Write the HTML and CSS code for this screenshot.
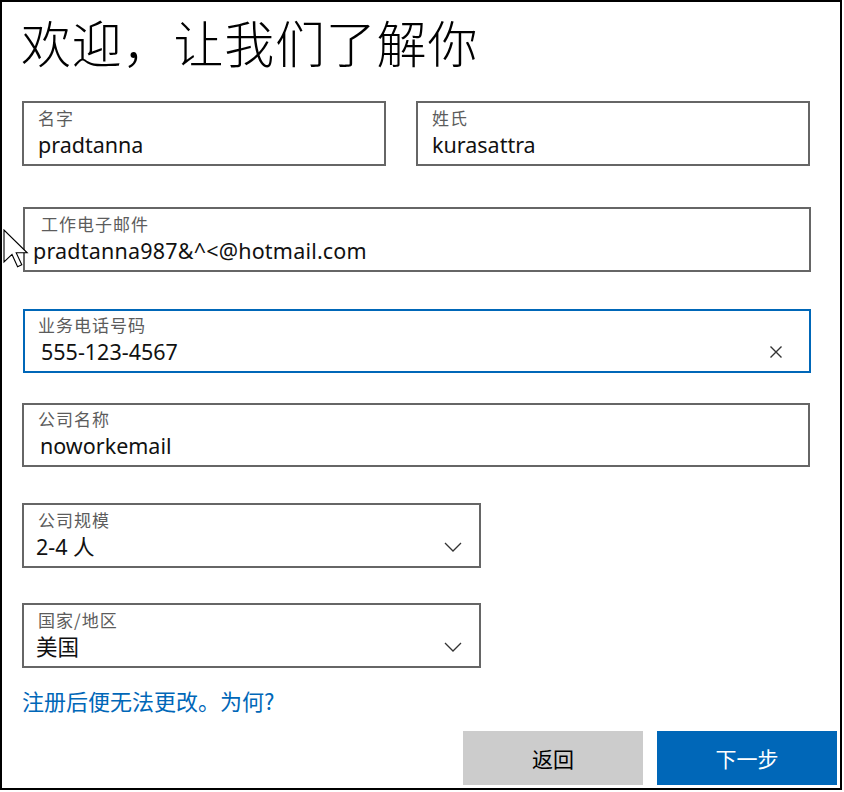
FILE: index.html
```html
<!DOCTYPE html>
<html lang="zh-CN">
<head>
<meta charset="utf-8">
<title>欢迎，让我们了解你</title>
<link rel="stylesheet" href="styles.css">
</head>
<body>
<div class="frame">
  <h1 class="title">欢迎，让我们了解你</h1>

  <div class="row-names">
    <div class="field field-first">
      <div class="label">名字</div>
      <div class="value">pradtanna</div>
    </div>
    <div class="field field-last">
      <div class="label">姓氏</div>
      <div class="value">kurasattra</div>
    </div>
  </div>

  <div class="field field-wide field-email">
    <div class="label">工作电子邮件</div>
    <div class="value value-email">pradtanna987&amp;^&lt;@hotmail.com</div>
  </div>

  <div class="field field-wide field-phone is-focused">
    <div class="label">业务电话号码</div>
    <div class="value value-row">
      <span>555-123-4567</span>
      <svg class="icon-clear" width="14" height="14" viewBox="0 0 14 14" aria-hidden="true">
        <path d="M1.5 1.5 L12.5 12.5 M12.5 1.5 L1.5 12.5" stroke="#333" stroke-width="1.4" fill="none"/>
      </svg>
    </div>
  </div>

  <div class="field field-wide field-company">
    <div class="label">公司名称</div>
    <div class="value">noworkemail</div>
  </div>

  <div class="field field-select field-size">
    <div class="label">公司规模</div>
    <div class="value value-row">
      <span>2-4 人</span>
      <svg class="icon-chevron" width="18" height="10" viewBox="0 0 18 10" aria-hidden="true">
        <path d="M1 1 L9 9 L17 1" stroke="#333" stroke-width="1.3" fill="none"/>
      </svg>
    </div>
  </div>

  <div class="field field-select field-country">
    <div class="label">国家/地区</div>
    <div class="value value-row">
      <span>美国</span>
      <svg class="icon-chevron" width="18" height="10" viewBox="0 0 18 10" aria-hidden="true">
        <path d="M1 1 L9 9 L17 1" stroke="#333" stroke-width="1.3" fill="none"/>
      </svg>
    </div>
  </div>

  <a class="why" href="#">注册后便无法更改。为何?</a>

  <div class="actions">
    <button class="btn btn-back" type="button">返回</button>
    <button class="btn btn-next" type="button">下一步</button>
  </div>

  <svg class="cursor" width="26" height="42" viewBox="0 0 26 42" aria-hidden="true">
    <path d="M1 1 L1 33 L9 25.4 L14.6 37.8 L18.8 35.8 L13.2 23.8 L24.2 23.8 Z" fill="#fff" stroke="#000" stroke-width="1.1" stroke-linejoin="miter"/>
  </svg>
</div>
</body>
</html>
```

FILE: styles.css
```css
* {
  box-sizing: border-box;
}

html, body {
  margin: 0;
  padding: 0;
  background: #fff;
}

body {
  font-family: "Noto Sans", "Noto Sans CJK SC", sans-serif;
  color: #000;
}

.frame {
  position: relative;
  width: 842px;
  height: 790px;
  border: 2px solid #000;
  padding: 9px 0 0 20px;
  display: flex;
  flex-direction: column;
  align-items: flex-start;
}

.title {
  margin: 0 0 0 -1px;
  font-family: "Noto Sans CJK SC", sans-serif;
  font-weight: 300;
  font-size: 50px;
  line-height: 60px;
  color: #000;
  letter-spacing: 0.8px;
}

.row-names {
  display: flex;
  gap: 30px;
  margin-top: 30px;
}

.field {
  height: 65px;
  border: 2px solid #666;
  padding: 2px 14px 0 14px;
  display: flex;
  flex-direction: column;
}

.field-first {
  width: 364px;
}

.field-last {
  width: 394px;
}

.field-wide {
  width: 788px;
}

.field-select {
  width: 459px;
}

.label {
  font-family: "Noto Sans CJK SC", sans-serif;
  font-size: 17px;
  line-height: 25px;
  letter-spacing: 1px;
  color: #5c5c5c;
}

.value {
  font-family: "Noto Sans", "Noto Sans CJK SC", sans-serif;
  font-size: 21.5px;
  line-height: 30px;
  color: #111;
  white-space: nowrap;
}

.value-email {
  letter-spacing: 0.2px;
}

.value-row {
  display: flex;
  align-items: center;
  justify-content: space-between;
}

.field-email {
  margin-top: 41px;
  margin-left: 1px;
  padding-left: 16px;
}

.field-email .value {
  margin-left: -8px;
}

.field-phone {
  margin-top: 37px;
  margin-left: 1px;
  height: 64px;
  padding-left: 13px;
  padding-right: 26px;
  padding-top: 1px;
}

.field-phone .value {
  margin-left: 3px;
}

.is-focused {
  border-color: #0067b8;
}

.field-company {
  margin-top: 30px;
  height: 64px;
  padding-top: 1px;
}

.field-company .value {
  margin-left: 2px;
}

.field-size {
  margin-top: 36px;
  padding-right: 17px;
}

.field-country {
  margin-top: 35px;
  padding-right: 17px;
}

.field-select .value {
  margin-left: -2px;
}

.icon-clear,
.icon-chevron {
  display: block;
  flex: none;
}

.why {
  margin-top: 19px;
  font-family: "Noto Sans CJK SC", sans-serif;
  font-size: 22px;
  line-height: 26px;
  color: #0067b8;
  text-decoration: none;
}

.actions {
  align-self: flex-end;
  display: flex;
  gap: 14px;
  margin-top: 18px;
  margin-right: 3px;
}

.btn {
  width: 180px;
  height: 54px;
  border: none;
  padding: 0;
  font-family: "Noto Sans CJK SC", sans-serif;
  font-size: 21px;
  cursor: pointer;
}

.btn-back {
  background: #cccccc;
  color: #000;
}

.btn-next {
  background: #0067b8;
  color: #fff;
}

.cursor {
  position: absolute;
  left: 1px;
  top: 227px;
}
```
